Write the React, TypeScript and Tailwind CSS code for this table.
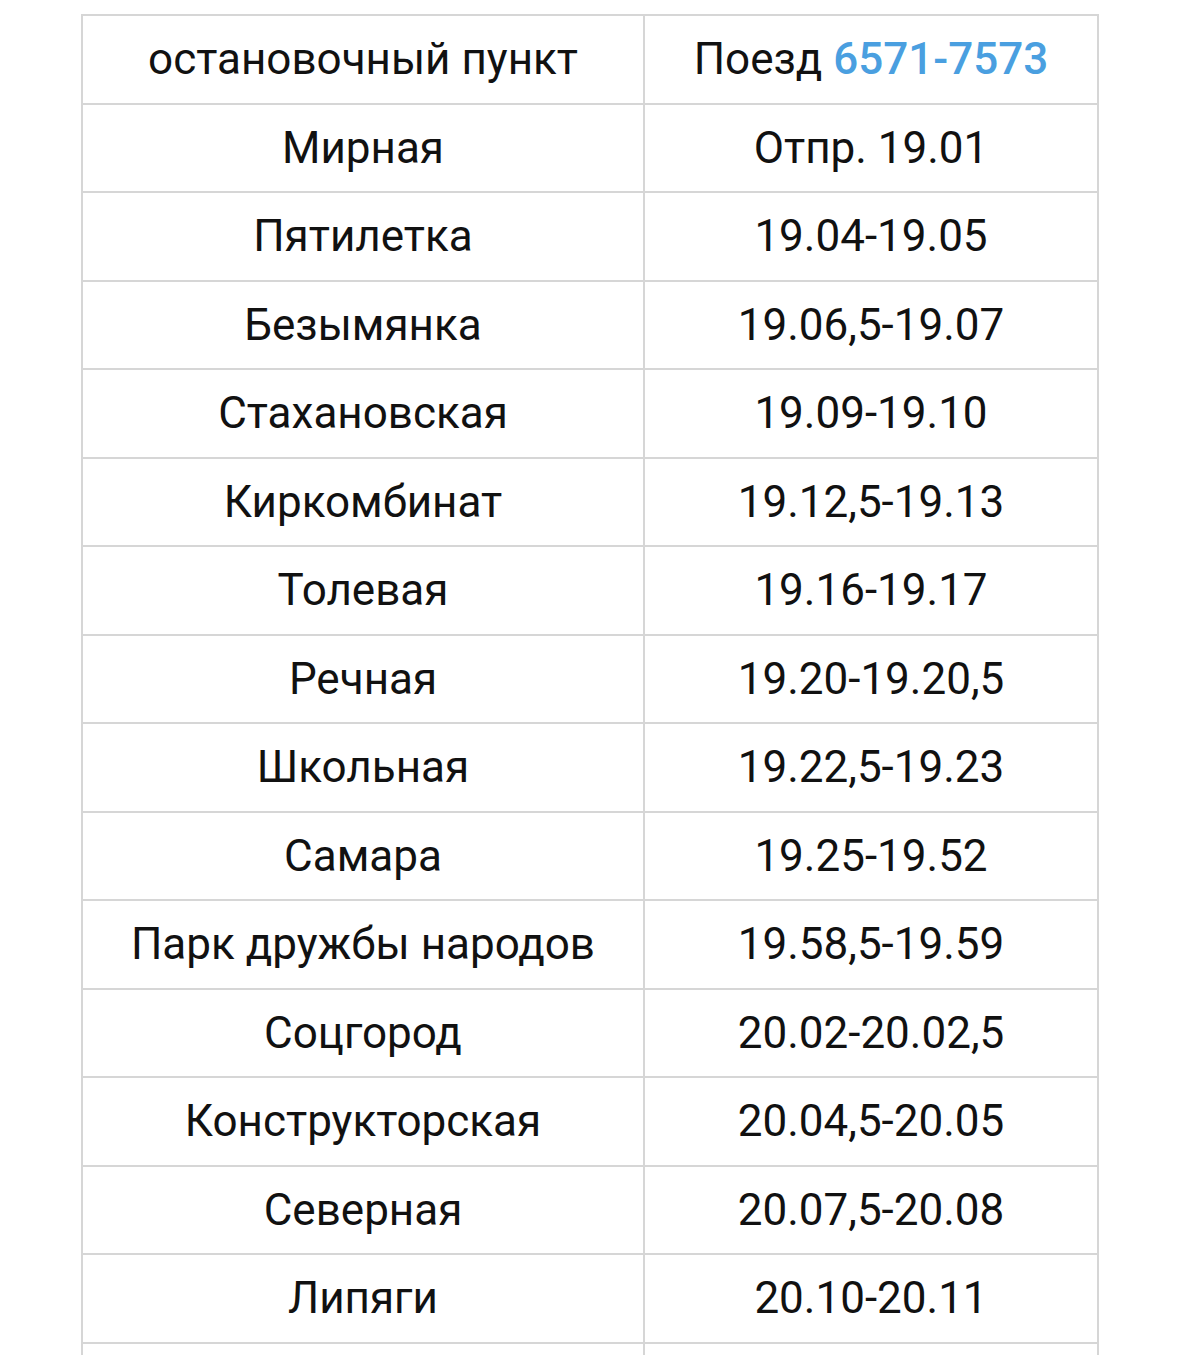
import React from "react";

// Расписание поезда по остановочным пунктам
const rows: [string, string][] = [
  ["Мирная", "Отпр. 19.01"],
  ["Пятилетка", "19.04-19.05"],
  ["Безымянка", "19.06,5-19.07"],
  ["Стахановская", "19.09-19.10"],
  ["Киркомбинат", "19.12,5-19.13"],
  ["Толевая", "19.16-19.17"],
  ["Речная", "19.20-19.20,5"],
  ["Школьная", "19.22,5-19.23"],
  ["Самара", "19.25-19.52"],
  ["Парк дружбы народов", "19.58,5-19.59"],
  ["Соцгород", "20.02-20.02,5"],
  ["Конструкторская", "20.04,5-20.05"],
  ["Северная", "20.07,5-20.08"],
  ["Липяги", "20.10-20.11"],
  ["", ""],
];

function Cell({ children }: { children: React.ReactNode }) {
  return (
    <div className="flex h-[88.5px] items-center justify-center border-b-2 border-r-2 border-[#d6d6d6]">
      {children}
    </div>
  );
}

export default function App() {
  return (
    <div className="h-[1355px] overflow-hidden bg-white pt-[14px] font-['Roboto',sans-serif] text-[44px] leading-none text-[#111]">
      <div className="ml-[81px] grid w-[1018px] grid-cols-[562px_454px] border-l-2 border-t-2 border-[#d6d6d6]">
        <Cell>остановочный пункт</Cell>
        <Cell>
          <span>
            Поезд <span className="font-medium text-[#4a9fe0]">6571-7573</span>
          </span>
        </Cell>
        {rows.map(([stop, time], i) => (
          <React.Fragment key={i}>
            <Cell>{stop}</Cell>
            <Cell>{time}</Cell>
          </React.Fragment>
        ))}
      </div>
    </div>
  );
}
